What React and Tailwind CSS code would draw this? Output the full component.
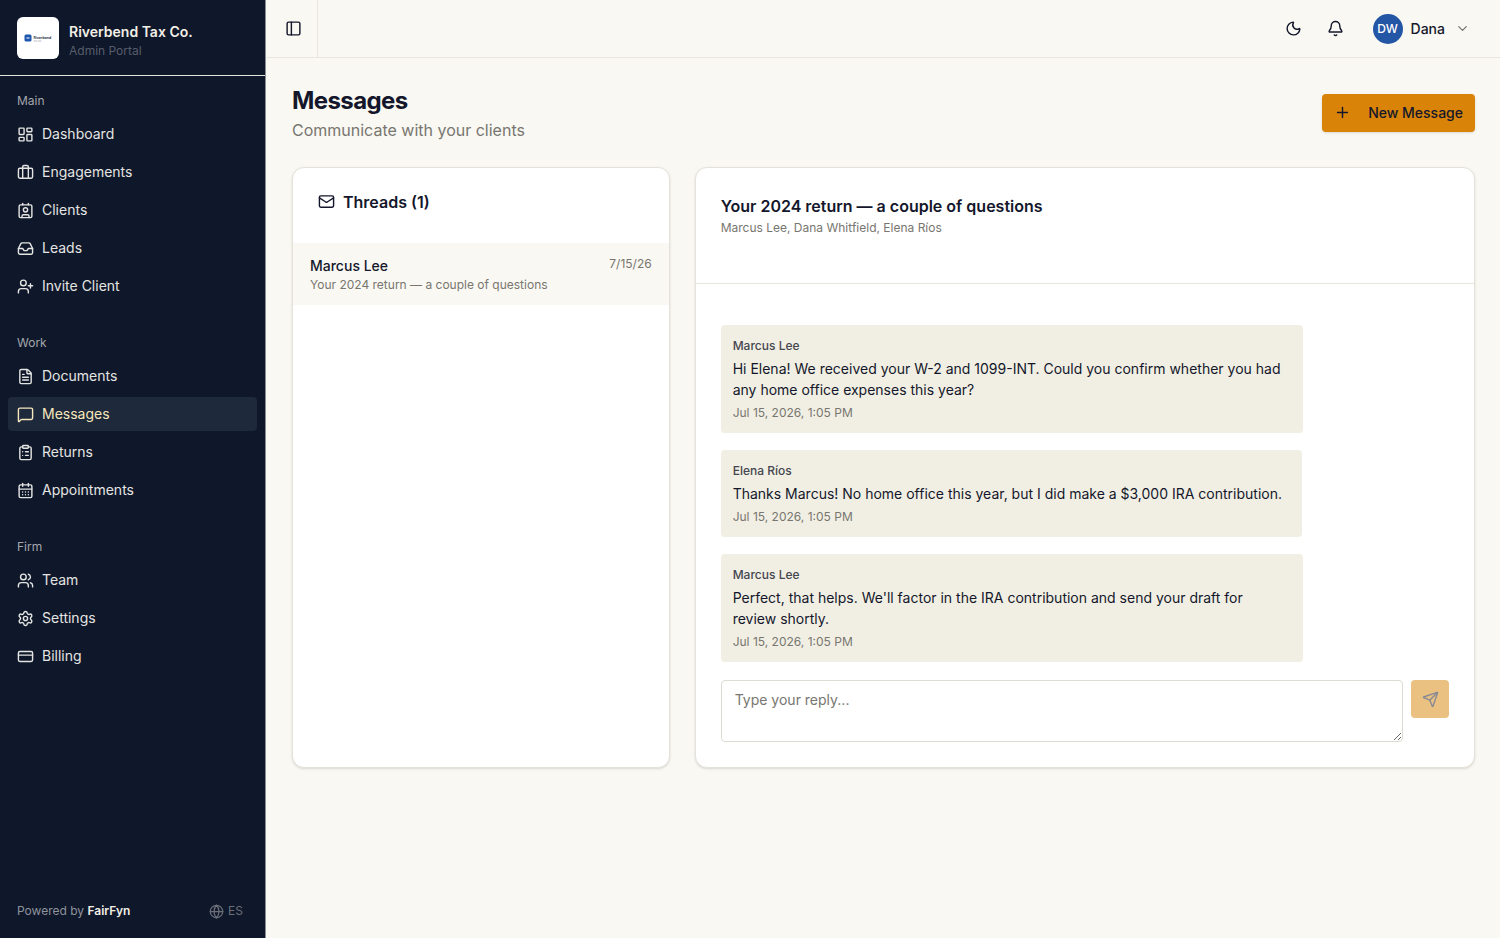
import React, { useState } from 'react';
import {
  Bell, CalendarDays, ChevronDown, ClipboardList, CreditCard, FileText, Globe, Inbox,
  LayoutDashboard, Mail, MessageSquare, Moon, PanelLeft, Plus, Send, Settings, UserPlus, Users,
} from 'lucide-react';
import clsx from 'clsx';

// briefcase with two vertical bars
function Briefcase({ size = 17 }) {
  return (
    <svg width={size} height={size} viewBox="0 0 24 24" fill="none" stroke="currentColor" strokeWidth="2" strokeLinecap="round" strokeLinejoin="round">
      <path d="M8 20V4a2 2 0 0 1 2-2h4a2 2 0 0 1 2 2v16" />
      <rect width="20" height="14" x="2" y="6" rx="2" />
    </svg>
  );
}

// person on a badge with two clips
function ClientBadge({ size = 17 }) {
  return (
    <svg width={size} height={size} viewBox="0 0 24 24" fill="none" stroke="currentColor" strokeWidth="2" strokeLinecap="round" strokeLinejoin="round">
      <path d="M16 2v2" />
      <path d="M7 22v-2a2 2 0 0 1 2-2h6a2 2 0 0 1 2 2v2" />
      <path d="M8 2v2" />
      <circle cx="12" cy="11" r="3" />
      <rect x="3" y="4" width="18" height="18" rx="2" />
    </svg>
  );
}

const groups = [
  {
    label: 'Main',
    items: [
      { name: 'Dashboard', icon: LayoutDashboard },
      { name: 'Engagements', icon: Briefcase },
      { name: 'Clients', icon: ClientBadge },
      { name: 'Leads', icon: Inbox },
      { name: 'Invite Client', icon: UserPlus },
    ],
  },
  {
    label: 'Work',
    items: [
      { name: 'Documents', icon: FileText },
      { name: 'Messages', icon: MessageSquare },
      { name: 'Returns', icon: ClipboardList },
      { name: 'Appointments', icon: CalendarDays },
    ],
  },
  {
    label: 'Firm',
    items: [
      { name: 'Team', icon: Users },
      { name: 'Settings', icon: Settings },
      { name: 'Billing', icon: CreditCard },
    ],
  },
];

const messages = [
  { id: 1, sender: 'Marcus Lee', body: 'Hi Elena! We received your W-2 and 1099-INT. Could you confirm whether you had any home office expenses this year?', date: 'Jul 15, 2026, 1:05 PM' },
  { id: 2, sender: 'Elena Ríos', body: 'Thanks Marcus! No home office this year, but I did make a $3,000 IRA contribution.', date: 'Jul 15, 2026, 1:05 PM' },
  { id: 3, sender: 'Marcus Lee', body: "Perfect, that helps. We'll factor in the IRA contribution and send your draft for review shortly.", date: 'Jul 15, 2026, 1:05 PM' },
];

function Logo() {
  return (
    <div className="flex size-[42px] shrink-0 items-center justify-center rounded-md bg-white">
      <svg width="28" height="10" viewBox="0 0 28 10">
        <rect x="0.5" y="1.5" width="7" height="7" rx="1.5" fill="#1f56ad" />
        <rect x="2.5" y="4" width="3" height="2" fill="#8fb0df" />
        <text x="9.5" y="5.8" fontSize="3.6" fontWeight="600" fill="#1a1f36" fontFamily="Inter, sans-serif">Riverbend</text>
        <text x="9.5" y="8.6" fontSize="2" fill="#8a93a5" fontFamily="Inter, sans-serif">TAX CO.</text>
      </svg>
    </div>
  );
}

function Sidebar() {
  return (
    <aside className="flex w-[266px] shrink-0 flex-col border-r border-[#8b8d92] bg-[#0f172a]">
      <div className="flex h-[76px] items-center gap-[10px] border-b border-[#e5e4dc] px-[17px]">
        <Logo />
        <div className="pt-1">
          <p className="text-sm leading-[21px] font-semibold text-[#f1efe6]">Riverbend Tax Co.</p>
          <p className="text-xs leading-[17px] text-[#575d6b]">Admin Portal</p>
        </div>
      </div>
      <nav className="flex flex-1 flex-col gap-[23px] px-2 pt-2">
        {groups.map(group => (
          <div key={group.label}>
            <h2 className="px-[9px] text-xs leading-[33px] text-[#a3a6ab]">{group.label}</h2>
            <ul className="flex flex-col gap-1">
              {group.items.map(({ name, icon: Icon }) => (
                <li key={name}>
                  <a
                    href="#"
                    className={clsx(
                      'flex h-[34px] items-center gap-2 rounded px-[9px] text-sm',
                      name === 'Messages' ? 'bg-[#1e293b] text-[#f6e7bd]' : 'text-[#e4e5e2]'
                    )}
                  >
                    <Icon size={17} />
                    {name}
                  </a>
                </li>
              ))}
            </ul>
          </div>
        ))}
      </nav>
      <div className="flex items-center justify-between pt-4 pr-[22px] pb-[18px] pl-[17px] text-xs leading-[18px] text-[#8e939c]">
        <p>Powered by <span className="font-semibold text-[#f1efe6]">FairFyn</span></p>
        <button type="button" className="flex items-center gap-1 text-[#6b6f78]">
          <Globe size={15} />
          ES
        </button>
      </div>
    </aside>
  );
}

function TopBar() {
  return (
    <header className="flex h-[58px] items-center justify-between border-b border-[#e8e6dd]">
      <div className="flex h-full w-[52px] items-center border-r border-[#e8e6dd] pl-[19px]">
        <button type="button" aria-label="Toggle sidebar"><PanelLeft size={17} /></button>
      </div>
      <div className="flex items-center pr-[30px]">
        <button type="button" aria-label="Dark mode" className="mr-[25px]"><Moon size={17} /></button>
        <button type="button" aria-label="Notifications" className="mr-[29px]"><Bell size={17} /></button>
        <button type="button" className="flex items-center text-sm font-medium">
          <span className="mr-2 flex size-[30px] items-center justify-center rounded-full bg-[#2456a6] text-xs text-white">DW</span>
          Dana
          <ChevronDown size={15} className="ml-[10px] text-[#78766f]" />
        </button>
      </div>
    </header>
  );
}

function Threads() {
  return (
    <section className="overflow-hidden rounded-xl border border-[#e5e3d9] bg-white shadow-sm">
      <h2 className="flex h-[75px] items-center gap-2 px-[25px] pb-2 text-base font-semibold">
        <Mail size={17} />
        Threads (1)
      </h2>
      <button type="button" className="flex w-full items-start justify-between bg-[#f9f8f3] px-[17px] py-3 text-left">
        <span>
          <span className="block text-sm leading-[21px] font-medium">Marcus Lee</span>
          <span className="block text-xs leading-[17px] text-[#78766f]">Your 2024 return — a couple of questions</span>
        </span>
        <span className="text-xs leading-[17px] text-[#78766f]">7/15/26</span>
      </button>
    </section>
  );
}

function Conversation() {
  const [reply, setReply] = useState('');

  return (
    <section className="col-span-2 rounded-xl border border-[#e5e3d9] bg-white shadow-sm">
      <div className="border-b border-[#e8e6dd] px-[25px] pt-[25px] pb-[46px]">
        <h2 className="text-base leading-[26px] font-semibold">Your 2024 return — a couple of questions</h2>
        <p className="text-xs leading-[18px] text-[#78766f]">Marcus Lee, Dana Whitfield, Elena Ríos</p>
      </div>
      <div className="px-[25px] pt-[41px] pb-[25px]">
        <div className="flex flex-col items-start gap-[17px]">
          {messages.map(msg => (
            <div key={msg.id} className="max-w-[80%] rounded bg-[#f1efe4] py-3 pr-5 pl-3">
              <p className="text-xs leading-[17px] font-medium text-[#45464f]">{msg.sender}</p>
              <p className="my-1 text-sm leading-[21px]">{msg.body}</p>
              <p className="text-xs leading-[17px] text-[#78766f]">{msg.date}</p>
            </div>
          ))}
        </div>
        <form className="mt-[18px] flex items-start gap-2" onSubmit={e => e.preventDefault()}>
          <textarea
            aria-label="Reply"
            placeholder="Type your reply..."
            rows={2}
            value={reply}
            onChange={e => setReply(e.target.value)}
            className="block min-h-[62px] flex-1 rounded border border-[#dddbd2] px-[13px] py-2 text-sm leading-[21px] placeholder:text-[#78766f]"
          />
          <button type="submit" aria-label="Send" disabled={!reply} className="flex size-[38px] items-center justify-center rounded bg-[#d98408] disabled:opacity-50">
            <Send size={17} />
          </button>
        </form>
      </div>
    </section>
  );
}

export default function App() {
  return (
    <div className="flex min-h-screen bg-[#f9f8f3] font-['Inter',sans-serif] text-[#14172b]">
      <Sidebar />
      <div className="min-w-0 flex-1">
        <TopBar />
        <main className="pt-[25px] pr-[25px] pb-6 pl-[26px]">
          <div className="mb-[25px] flex items-center justify-between">
            <div>
              <h1 className="text-2xl leading-9 font-bold tracking-tight">Messages</h1>
              <p className="text-base leading-[23px] text-[#78766f]">Communicate with your clients</p>
            </div>
            <button type="button" className="flex h-[38px] items-center gap-[17px] rounded bg-[#d98408] px-3 text-sm font-medium shadow-sm">
              <Plus size={17} />
              New Message
            </button>
          </div>
          <div className="grid grid-cols-3 gap-[25px]">
            <Threads />
            <Conversation />
          </div>
        </main>
      </div>
    </div>
  );
}
